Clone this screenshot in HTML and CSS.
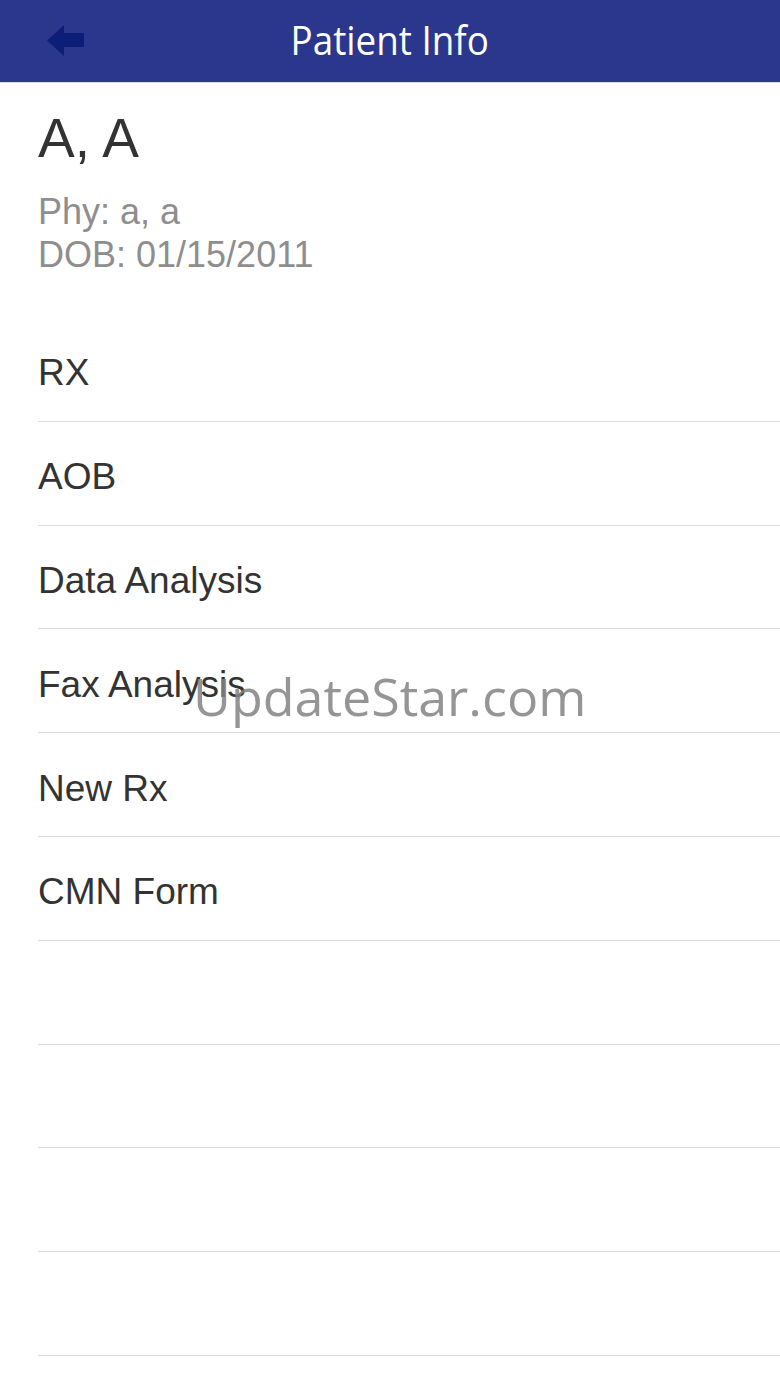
FILE: index.html
```html
<!DOCTYPE html>
<html>
<head>
<meta charset="utf-8">
<link rel="stylesheet" href="styles.css">
</head>
<body>
<div class="screen">
  <header class="navbar">
    <button class="back" aria-label="Back">
      <svg width="38" height="32" viewBox="0 0 38 32"><path d="M0 15.5 L17 0 L17 8 L37 8 L37 22 L17 22 L17 31 Z" fill="#0c1e78"/></svg>
    </button>
    <h1 class="title">Patient Info</h1>
  </header>
  <section class="patient">
    <div class="name">A, A</div>
    <div class="meta">Phy: a, a</div>
    <div class="meta">DOB: 01/15/2011</div>
  </section>
  <ul class="list">
    <li class="row">RX</li>
    <li class="row">AOB</li>
    <li class="row">Data Analysis</li>
    <li class="row">Fax Analysis</li>
    <li class="row">New Rx</li>
    <li class="row">CMN Form</li>
    <li class="row"></li>
    <li class="row"></li>
    <li class="row"></li>
    <li class="row"></li>
  </ul>
  <div class="watermark">UpdateStar.com</div>
</div>
</body>
</html>
```
FILE: styles.css
```css
html, body {
  margin: 0;
  padding: 0;
  background: #fff;
}
.screen {
  position: relative;
  width: 780px;
  height: 1387px;
  overflow: hidden;
  font-family: "Liberation Sans", Arial, sans-serif;
  color: #333;
}
.navbar {
  height: 82px;
  background: #2b378c;
  display: flex;
  align-items: center;
  justify-content: center;
  position: relative;
  border-bottom: 1px solid #d8dce8;
}
.back {
  position: absolute;
  left: 47px;
  top: 25px;
  padding: 0;
  margin: 0;
  border: 0;
  background: none;
  display: flex;
}
.title {
  margin: 0;
  color: #fff;
  font-family: "Open Sans", "Noto Sans", sans-serif;
  font-weight: 400;
  font-size: 40px;
  line-height: 1;
  transform: scaleX(0.92);
  padding-bottom: 2px;
}
.patient {
  height: 235px;
  box-sizing: border-box;
  padding: 20px 0 0 38px;
}
.name {
  font-size: 55px;
  line-height: 70px;
  color: #333;
}
.meta {
  font-size: 36px;
  line-height: 43px;
  color: #8e8e8e;
}
.patient .name + .meta {
  margin-top: 17px;
}
.list {
  list-style: none;
  margin: 0;
  padding: 0 0 0 38px;
}
.row {
  height: 103.8px;
  box-sizing: border-box;
  border-bottom: 1px solid #dcdcdc;
  display: flex;
  align-items: center;
  font-size: 37px;
  color: #333;
  padding-top: 8px;
}
.watermark {
  position: absolute;
  left: 193px;
  top: 661px;
  font-family: "Open Sans", "Noto Sans", sans-serif;
  font-size: 52px;
  color: rgba(130, 130, 130, 0.85);
  line-height: 70px;
}
```
